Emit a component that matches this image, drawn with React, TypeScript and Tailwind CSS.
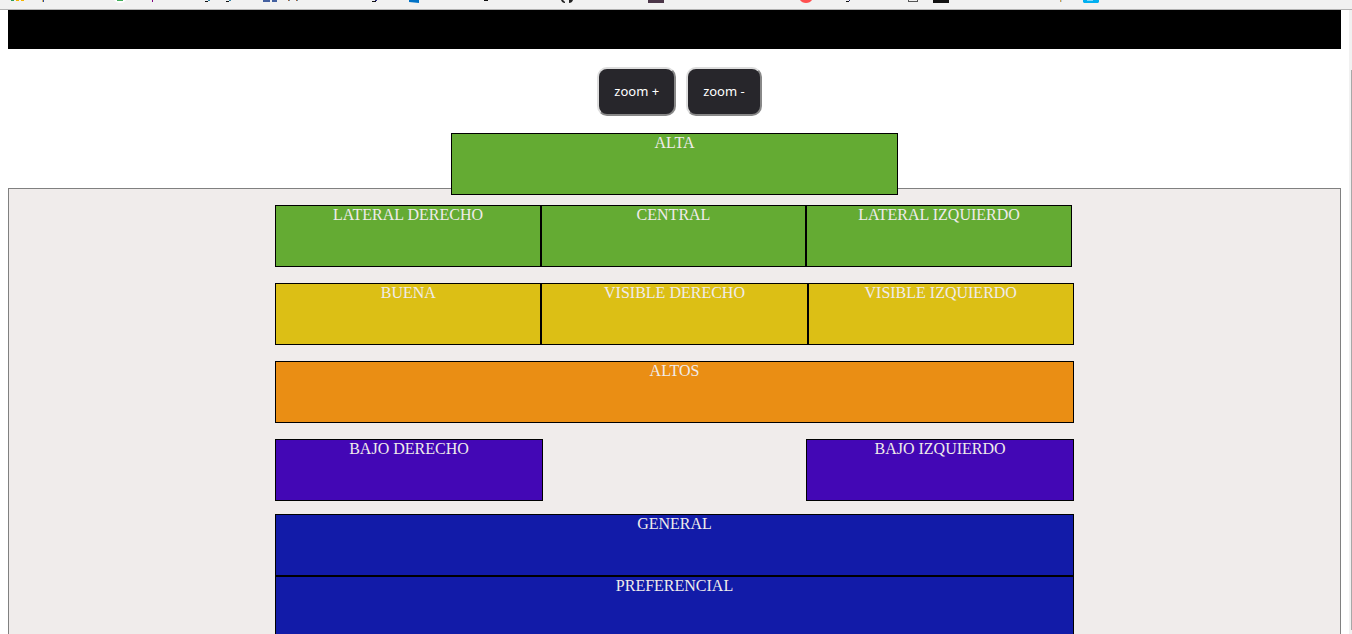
import type { ReactNode } from "react";

function Zone({ name, className }: { name: string; className: string }) {
  return (
    <div className={`h-[62px] border border-black text-center leading-[18px] ${className}`}>
      {name}
    </div>
  );
}

function Row({ className, children }: { className: string; children: ReactNode }) {
  return <div className={`flex w-[60%] ${className}`}>{children}</div>;
}

function ZoomButton({ label }: { label: string }) {
  return (
    <button
      type="button"
      className="ml-[10px] rounded-[10px] border-2 border-t-[#dddddd] border-r-[#888888] border-b-[#888888] border-l-[#dddddd] bg-[#27262b] p-[15px] font-['Noto_Sans',sans-serif] text-[13px] leading-[15px] text-white"
    >
      {label}
    </button>
  );
}

function BookmarkStrip() {
  return (
    <svg width="1100" height="4" viewBox="0 0 1100 4" className="block shrink-0" aria-hidden="true">
      <g shapeRendering="crispEdges">
        <path fill="#2a9d58" d="M11 0h3v1h-3z" />
        <path fill="#f4b400" d="M16 0h3v1h-3zM21 0h3v1h-3z" />
        <path fill="#e0b860" d="M42 0h1v2h-1z" />
        <path fill="#2b4a9b" d="M43 0h1v2h-1z" />
        <path fill="#800080" d="M152 0h1v2h-1z" />
        <path fill="#111111" d="M205 1h3v1h-3zM226 1h3v1h-3zM372 1h4v1h-4zM484 0h4v1h-4zM846 1h3v1h-3z" />
        <path fill="#3886a8" d="M208 0h2v1h-2zM229 0h2v1h-2z" />
        <path fill="#303080" d="M375 0h2v1h-2zM849 0h1v1h-1z" />
        <path fill="#4460a0" d="M263 0h7v2h-7zM272 0h5v2h-5z" />
        <path fill="#b06030" d="M288 0h1v1h-1zM296 0h1v1h-1z" />
        <path fill="#5a8ab0" d="M289 0h1v1h-1zM297 0h1v1h-1z" />
        <path fill="#4b3648" d="M648 0h16v3h-16z" />
        <path fill="#555555" d="M908 0h1v2h-1zM917 0h1v2h-1zM908 1h10v1h-10z" />
        <path fill="#111111" d="M933 0h16v3h-16z" />
        <path fill="#d0a050" d="M1060 0h1v2h-1z" />
        <path fill="#b8d0e0" d="M1061 0h1v2h-1z" />
      </g>
      <path fill="#ffffff" d="M114 0h12q-2 3-6 3t-6-3z" />
      <path fill="#43b05c" d="M117 0h6v1h-6z" />
      <path fill="#0072c6" d="M409 0h10v3l-10-1z" />
      <path fill="#222222" d="M561 0h2l2 2v1q-3 0-4-3zM569 0h4q-1 3-4 3z" />
      <path fill="#ff5050" d="M800 0h12q-2 3-6 3t-6-3z" />
      <path fill="#00aff0" d="M1083 0h16v2l-1 1h-14l-1-1z" />
      <path fill="#80d8f8" d="M1087 0h6v1h-6z" />
    </svg>
  );
}

export default function App() {
  return (
    <div className="flex h-screen flex-col overflow-hidden bg-white">
      <header className="h-[10px] shrink-0 overflow-hidden border-b border-[#b2b2b2] bg-[#f1f1f1]">
        <BookmarkStrip />
      </header>
      <div className="flex min-h-0 flex-1">
        <main className="flex min-w-0 flex-1 flex-col overflow-hidden px-2 font-['Liberation_Serif',serif] text-base text-[#f0eceb]">
          <div className="h-[39px] shrink-0 bg-black" />
          <div className="mt-[18px] flex shrink-0 justify-center">
            <ZoomButton label="zoom +" />
            <ZoomButton label="zoom -" />
          </div>
          <section className="mt-[72px] flex flex-1 flex-col items-center border border-b-0 border-[#808080] bg-[#f0eceb]">
            <Row className="-mt-14 shrink-0 justify-center">
              <Zone name="ALTA" className="w-[56%] bg-[#64ab33]" />
            </Row>
            <Row className="mt-[10px] shrink-0 pr-[2px]">
              <Zone name="LATERAL DERECHO" className="flex-1 bg-[#64ab33]" />
              <Zone name="CENTRAL" className="flex-1 bg-[#64ab33]" />
              <Zone name="LATERAL IZQUIERDO" className="flex-1 bg-[#64ab33]" />
            </Row>
            <Row className="mt-4 shrink-0">
              <Zone name="BUENA" className="flex-1 bg-[#dcbf15]" />
              <Zone name="VISIBLE DERECHO" className="flex-1 bg-[#dcbf15]" />
              <Zone name="VISIBLE IZQUIERDO" className="flex-1 bg-[#dcbf15]" />
            </Row>
            <Row className="mt-4 shrink-0">
              <Zone name="ALTOS" className="flex-1 bg-[#ea8e14]" />
            </Row>
            <Row className="mt-4 shrink-0 justify-between">
              <Zone name="BAJO DERECHO" className="w-[33.5%] bg-[#4307b5]" />
              <Zone name="BAJO IZQUIERDO" className="w-[33.5%] bg-[#4307b5]" />
            </Row>
            <Row className="mt-[13px] shrink-0 flex-col">
              <Zone name="GENERAL" className="bg-[#121ba8]" />
              <Zone name="PREFERENCIAL" className="bg-[#121ba8]" />
            </Row>
          </section>
        </main>
        <div className="flex w-[3px] shrink-0 flex-col items-end bg-[#f1f1f1] pt-[60px] pb-1">
          <div className="w-px flex-1 bg-[#a8a8a8]" />
        </div>
      </div>
    </div>
  );
}
